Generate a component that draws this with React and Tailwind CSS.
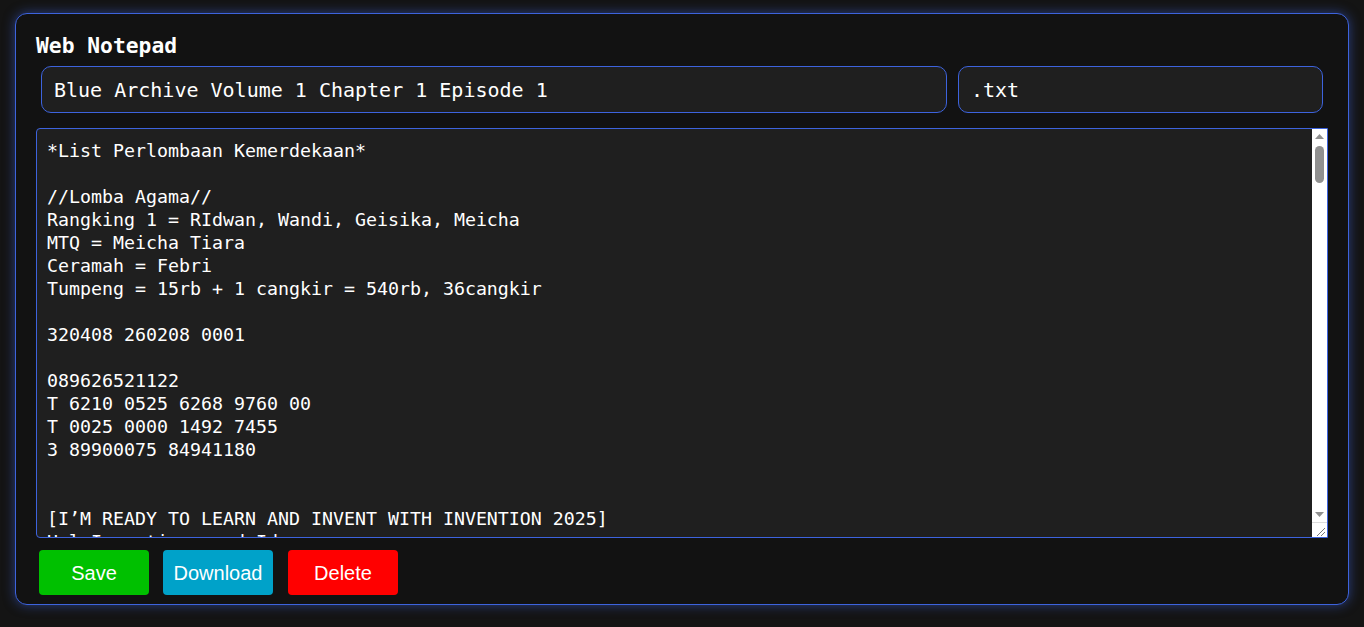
import { useState } from 'react';

const initialNote = `*List Perlombaan Kemerdekaan*

//Lomba Agama//
Rangking 1 = RIdwan, Wandi, Geisika, Meicha
MTQ = Meicha Tiara
Ceramah = Febri
Tumpeng = 15rb + 1 cangkir = 540rb, 36cangkir

320408 260208 0001

089626521122
T 6210 0525 6268 9760 00
T 0025 0000 1492 7455
3 89900075 84941180


[I’M READY TO LEARN AND INVENT WITH INVENTION 2025]
Hal Inventions and Ideas

//Lomba Anak//
Balap Karung
Makan Kerupuk
Tarik Tambang
Panjat Pinang
Estafet Kelereng`;

function Scrollbar() {
  return (
    <div className="flex w-[15px] shrink-0 flex-col bg-white">
      <div className="flex h-[15px] items-center justify-center">
        <svg width="9" height="5" viewBox="0 0 9 5">
          <polygon points="0,5 4.5,0 9,5" fill="#909090" />
        </svg>
      </div>
      <div className="px-[3px] pt-[2px]">
        <div className="h-[37px] rounded-full bg-[#909090]" />
      </div>
      <div className="flex-1" />
      <div className="flex h-[15px] items-center justify-center">
        <svg width="9" height="5" viewBox="0 0 9 5">
          <polygon points="0,0 9,0 4.5,5" fill="#909090" />
        </svg>
      </div>
      <div className="h-[15px] border-t border-[#dcdcdc] bg-white">
        <svg width="14" height="14" viewBox="0 0 14 14">
          <line x1="13" y1="5" x2="5" y2="13" stroke="#7a7a7a" strokeWidth="1" />
          <line x1="13" y1="9" x2="9" y2="13" stroke="#7a7a7a" strokeWidth="1" />
        </svg>
      </div>
    </div>
  );
}

export default function App() {
  const [title, setTitle] = useState('Blue Archive Volume 1 Chapter 1 Episode 1');
  const [ext, setExt] = useState('.txt');
  const [note, setNote] = useState(initialNote);

  return (
    <div className="min-h-[627px] bg-[#141414] px-[15px] pt-[13px] pb-[21px]">
      <div className="rounded-[12px] border border-[#3d63dd] bg-[#121212] px-5 pt-[18px] pb-[9px] shadow-[0_0_12px_rgba(61,99,221,0.55)]">
        <h2 className="font-['DejaVu_Sans_Mono',monospace] text-[21.3px] font-bold leading-[28px] text-white">
          Web Notepad
        </h2>

        <div className="mx-[5px] mt-[6px] flex gap-[11px]">
          <input
            value={title}
            onChange={(event) => setTitle(event.target.value)}
            className="h-[47px] min-w-0 flex-1 rounded-[10px] border border-[#3d63dd] bg-[#1f1f1f] px-3 font-['DejaVu_Sans_Mono',monospace] text-[20px] text-white outline-none"
          />
          <input
            value={ext}
            onChange={(event) => setExt(event.target.value)}
            className="h-[47px] w-[365px] rounded-[10px] border border-[#3d63dd] bg-[#1f1f1f] px-3 font-['DejaVu_Sans_Mono',monospace] text-[20px] text-white outline-none"
          />
        </div>

        <div className="mt-[15px] flex h-[410px] overflow-hidden rounded-tl-[4px] rounded-bl-[4px] border border-[#3d63dd] bg-[#1f1f1f]">
          <textarea
            value={note}
            onChange={(event) => setNote(event.target.value)}
            className="block min-w-0 flex-1 resize-none overflow-hidden bg-transparent px-[10px] pt-[10px] font-['DejaVu_Sans_Mono',monospace] text-[18.27px] leading-[23px] text-white outline-none"
          />
          <Scrollbar />
        </div>

        <div className="mt-3 flex gap-[14px] pl-[3px]">
          <button
            type="button"
            className="h-[45px] w-[110px] rounded-[4px] bg-[#00c000] font-['Liberation_Sans',Arial,sans-serif] text-[20px] text-white"
          >
            Save
          </button>
          <button
            type="button"
            className="h-[45px] w-[110px] rounded-[4px] bg-[#00a2c9] font-['Liberation_Sans',Arial,sans-serif] text-[20px] text-white"
          >
            Download
          </button>
          <button
            type="button"
            className="ml-px h-[45px] w-[110px] rounded-[4px] bg-[#ff0000] font-['Liberation_Sans',Arial,sans-serif] text-[20px] text-white"
          >
            Delete
          </button>
        </div>
      </div>
    </div>
  );
}
